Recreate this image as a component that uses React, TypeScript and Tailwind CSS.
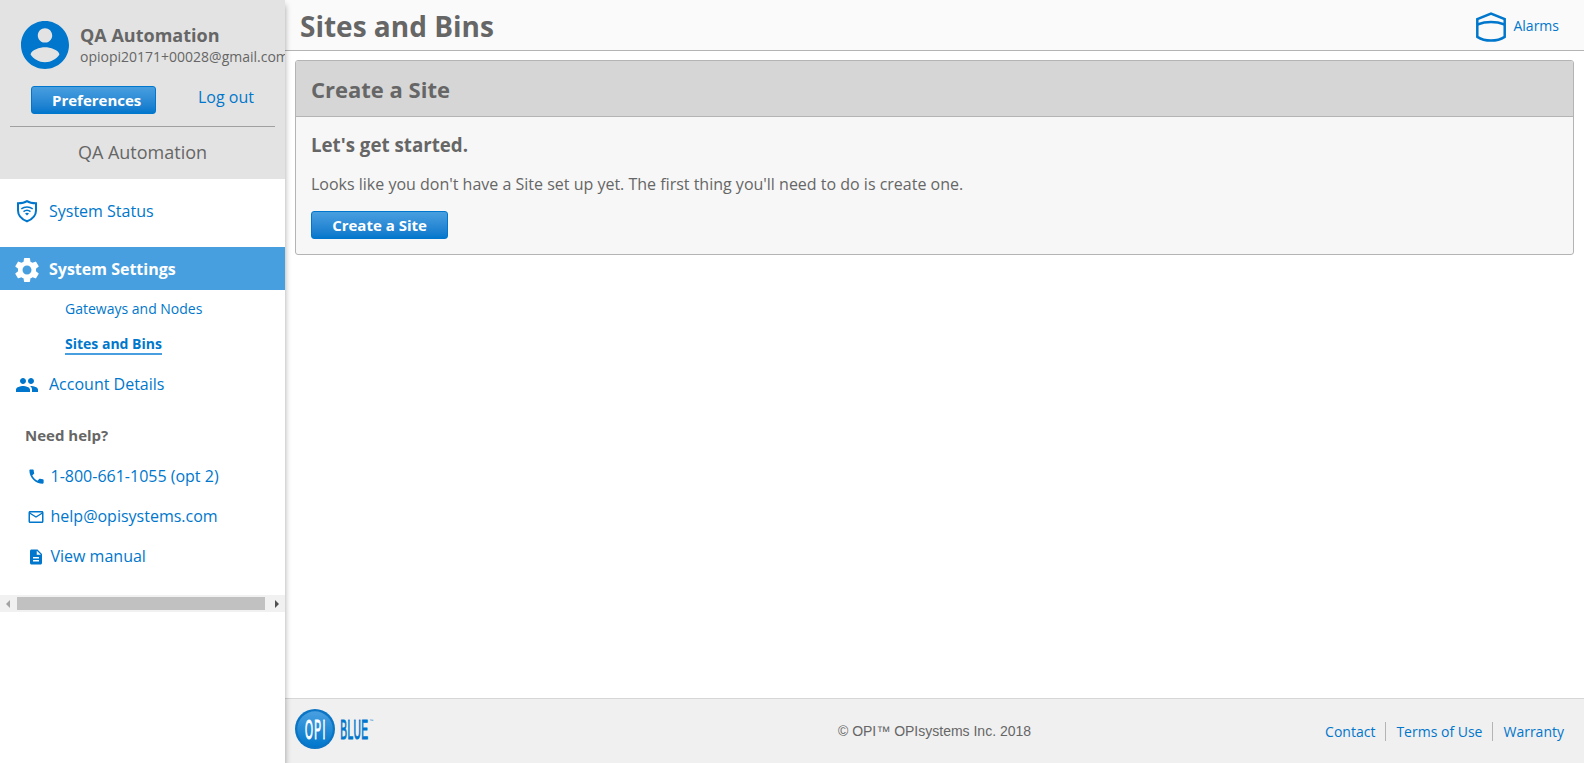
import type { ReactNode } from 'react';
import { MdDescription, MdMailOutline, MdPeople, MdPhone, MdSettings } from 'react-icons/md';

function AvatarIcon() {
  return (
    <svg width="48" height="48" viewBox="2 2 20 20" fill="#0077cc" className="shrink-0">
      <path d="M12 2C6.480 2 2 6.480 2 12s4.480 10 10 10 10-4.480 10-10S17.520 2 12 2zm0 3c1.660 0 3 1.340 3 3s-1.340 3-3 3-3-1.340-3-3 1.340-3 3-3zm0 14.200c-2.500 0-4.710-1.280-6-3.220.030-1.990 4-3.080 6-3.080 1.990 0 5.970 1.090 6 3.080-1.290 1.940-3.500 3.220-6 3.220z" />
    </svg>
  );
}

function ShieldWifiIcon() {
  return (
    <svg width="22" height="24" viewBox="0 0 22 24" fill="none" stroke="#0077cc">
      <path d="M11 2.100C8.600 3.700 5 4.200 2 4.200v7.200c0 5 3.600 8.700 9 10.900 5.400-2.200 9-5.900 9-10.900V4.200c-3 0-6.600-.5-9-2.100z" strokeWidth="2" />
      <path d="M5.300 9.900c3.300-2.600 8.100-2.600 11.400 0M7.500 12.600c2.100-1.700 4.900-1.700 7 0" strokeWidth="1.500" />
      <path d="M9 14.400c1.200-.8 2.800-.8 4 0l-2 2.100z" fill="#0077cc" stroke="none" />
    </svg>
  );
}

function BinIcon() {
  return (
    <svg width="30" height="30" viewBox="0 0 30 30" fill="none" stroke="#0077cc" strokeWidth="2.500">
      <path d="M1.300 7.200 15 1.500l13.700 5.700v17.700C24.500 27.600 20 28.600 15 28.600S5.500 27.600 1.300 24.900z" />
      <path d="M1.300 12.500C9.500 9.600 20.500 9.600 28.700 12.500" />
    </svg>
  );
}

function Logo() {
  return (
    <svg width="80" height="40" viewBox="0 0 80 40" className="mb-1 font-['Liberation_Sans_Narrow','Liberation_Sans',sans-serif]">
      <defs>
        <linearGradient id="ball" x1="0" y1="0" x2="0" y2="1">
          <stop offset="0" stopColor="#4aa0e0" />
          <stop offset="1" stopColor="#0077cc" />
        </linearGradient>
      </defs>
      <circle cx="20" cy="20" r="20" fill="#0b74c4" />
      <circle cx="20" cy="20" r="17.700" fill="url(#ball)" />
      <g fontSize="27.500" strokeWidth=".8">
        <text transform="translate(10 30) scale(.37 1)" fill="#fff" stroke="#fff" vectorEffect="non-scaling-stroke" textLength="55" lengthAdjust="spacing">OPI</text>
        <text transform="translate(45.300 30) scale(.37 1)" fill="#0077cc" stroke="#0077cc" vectorEffect="non-scaling-stroke" textLength="75" lengthAdjust="spacing">BLUE</text>
      </g>
      <text x="74.300" y="13" fontSize="4" fill="#0077cc">™</text>
    </svg>
  );
}

function BlueButton({ className, children }: { className: string; children: ReactNode }) {
  return (
    <button className={`flex h-7 items-center rounded-[3px] border border-[#0077cc] bg-linear-to-b from-[#489fdf] to-[#0077cc] text-[15px] leading-5 font-bold whitespace-nowrap text-white ${className}`}>
      {children}
    </button>
  );
}

function HelpLink({ icon, children }: { icon: ReactNode; children: ReactNode }) {
  return (
    <a className="flex h-10 items-center pl-[26.500px] text-base whitespace-nowrap text-[#0077cc]">
      <span className="mr-[6px] w-[18px] shrink-0 pt-px">{icon}</span>
      {children}
    </a>
  );
}

function Sidebar() {
  return (
    <aside className="z-10 flex w-[285px] shrink-0 flex-col overflow-hidden bg-white text-[#0077cc] shadow-[0_5px_6px_rgba(0,0,0,0.36)]">
      <div className="flex h-[179px] flex-col bg-[#e3e3e3] text-[#666]">
        <div className="flex h-[86px] pt-[21px] pl-[21px]">
          <AvatarIcon />
          <div className="ml-[11px] pt-1 whitespace-nowrap">
            <div className="text-lg leading-5 font-bold">QA Automation</div>
            <div className="mt-[2px] text-sm leading-5">opiopi20171+00028@gmail.com</div>
          </div>
        </div>
        <div className="flex h-10 pl-[31px]">
          <BlueButton className="w-[125px] pl-5">Preferences</BlueButton>
          <a className="ml-[42px] text-base leading-[22px] text-[#0077cc]">Log out</a>
        </div>
        <div className="mx-[10px] border-t border-[#a0a0a0]" />
        <div className="text-center text-lg leading-[50px]">QA Automation</div>
      </div>

      <nav className="flex flex-col whitespace-nowrap">
        <a className="flex h-[68px] items-center pb-1 pl-4 text-base">
          <span className="mr-[11px] w-[22px]"><ShieldWifiIcon /></span>
          System Status
        </a>
        <a className="flex h-[43px] items-center bg-[#489fdf] pl-3 text-base font-bold text-white">
          <MdSettings className="mt-[2px] mr-[7px] size-[30px]" />
          System Settings
        </a>
        <a className="mt-[9px] pl-[65px] text-sm leading-5">Gateways and Nodes</a>
        <a className="mt-[15px] ml-[65px] h-[21px] self-start border-b-2 border-[#489fdf] text-sm leading-5 font-bold">Sites and Bins</a>
        <a className="mt-[17px] flex h-6 items-center pl-[15px] text-base">
          <MdPeople className="mt-[2px] mr-[10px] size-6" />
          Account Details
        </a>
      </nav>

      <div className="mt-[29px] pl-[25px] text-[15px] leading-5 font-bold text-[#666]">Need help?</div>
      <div className="mt-[11px] flex flex-col">
        <HelpLink icon={<MdPhone className="size-[19px]" />}>1-800-661-1055 (opt 2)</HelpLink>
        <HelpLink icon={<MdMailOutline className="size-[18px]" />}>help@opisystems.com</HelpLink>
        <HelpLink icon={<MdDescription className="size-[18px]" />}>View manual</HelpLink>
      </div>

      <div className="mt-[19px] flex h-[17px] items-center bg-[#f1f1f1]">
        <svg width="17" height="17" viewBox="0 0 17 17" fill="#a3a3a3"><path d="M10 5v8L6 9z" /></svg>
        <div className="h-[13px] w-[248px] bg-[#c1c1c1]" />
        <svg className="ml-[3px]" width="17" height="17" viewBox="0 0 17 17" fill="#505050"><path d="M7 5v8l4-4z" /></svg>
      </div>
    </aside>
  );
}

export default function App() {
  return (
    <div className="flex h-[763px] w-full overflow-hidden bg-white font-['Open_Sans',sans-serif] text-[#666]">
      <Sidebar />
      <div className="flex min-w-0 flex-1 flex-col">
        <header className="flex h-[51px] items-center justify-between border-b border-[#b4b4b4] bg-[#fafafa] pr-[25px] pl-[15px]">
          <h1 className="pt-px text-[28px] leading-[50px] font-bold">Sites and Bins</h1>
          <a className="flex items-center gap-[7px] pt-[2px] text-sm text-[#0077cc]">
            <span className="pt-[2px]"><BinIcon /></span>
            Alarms
          </a>
        </header>

        <main className="flex-1 px-[10px] pt-[9px]">
          <section className="h-[195px] overflow-hidden rounded-[3px] border border-[#b4b4b4] bg-[#f7f7f7]">
            <h2 className="h-14 border-b border-[#b4b4b4] bg-[#d6d6d6] pl-[15px] text-[22px] leading-[56px] font-bold">Create a Site</h2>
            <div className="pl-[15px]">
              <h3 className="pt-4 text-[18.72px] leading-6 font-bold">Let's get started.</h3>
              <p className="mt-[15px] text-base leading-6">
                Looks like you don't have a Site set up yet. The first thing you'll need to do is create one.
              </p>
              <BlueButton className="mt-[15px] w-[137px] justify-center">Create a Site</BlueButton>
            </div>
          </section>
        </main>

        <footer className="grid h-[65px] grid-cols-[1fr_auto_1fr] items-center border-t border-[#d6d6d6] bg-[#f0f0f0] pr-5 pl-5">
          <div className="-ml-[10px]"><Logo /></div>
          <div className="font-['Liberation_Sans',sans-serif] text-sm">© OPI™ OPIsystems Inc. 2018</div>
          <div className="flex items-center justify-end text-sm text-[#0077cc]">
            <a className="pt-px pr-[10px] leading-[19px]">Contact</a>
            <a className="border-l border-[#b4b4b4] px-[10px] leading-[19px]">Terms of Use</a>
            <a className="border-l border-[#b4b4b4] pl-[10px] leading-[19px]">Warranty</a>
          </div>
        </footer>
      </div>
    </div>
  );
}
